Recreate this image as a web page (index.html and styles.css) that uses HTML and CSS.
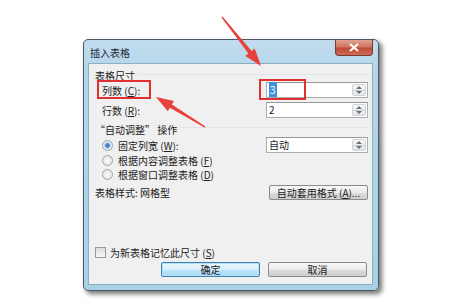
FILE: index.html
```html
<!DOCTYPE html>
<html lang="zh-CN">
<head>
    <meta charset="UTF-8">
    <meta name="viewport" content="width=device-width, initial-scale=1.0">
    <title>插入表格</title>
    <link rel="stylesheet" href="styles.css">
</head>
<body>
    <div class="page">
        <div class="dialog">
            <div class="titlebar">
                <span class="title">插入表格</span>
                <span class="close-btn">
                    <svg width="12" height="9" viewBox="0 0 12 9"><path d="M2 1 L10 8 M10 1 L2 8" stroke="#fff" stroke-width="2.2"/></svg>
                </span>
            </div>
            <div class="client">
                <div class="group-head row-size">表格尺寸<span class="rule"></span></div>
                <div class="field row-cols">
                    <span class="label">列数 (<u>C</u>):</span>
                    <span class="spin"><span class="value"><span class="sel">3</span></span><span class="arrows"></span></span>
                </div>
                <div class="field row-rows">
                    <span class="label">行数 (<u>R</u>):</span>
                    <span class="spin"><span class="value">2</span><span class="arrows"></span></span>
                </div>
                <div class="group-head row-auto">“自动调整” 操作<span class="rule"></span></div>
                <div class="field row-fixed">
                    <span class="label"><span class="radio on"></span>固定列宽 (<u>W</u>):</span>
                    <span class="spin"><span class="value">自动</span><span class="arrows"></span></span>
                </div>
                <div class="field row-opt">
                    <span class="label"><span class="radio"></span>根据内容调整表格 (<u>F</u>)</span>
                </div>
                <div class="field row-opt">
                    <span class="label"><span class="radio"></span>根据窗口调整表格 (<u>D</u>)</span>
                </div>
                <div class="field row-style">
                    <span class="style-label">表格样式: 网格型</span>
                    <span class="btn">自动套用格式 (<u>A</u>)...</span>
                </div>
                <div class="check-row">
                    <span class="checkbox"></span>为新表格记忆此尺寸 (<u>S</u>)
                </div>
                <div class="actions">
                    <span class="btn default">确定</span>
                    <span class="btn">取消</span>
                </div>
            </div>
        </div>
    </div>

    <svg class="marks" width="465" height="307" viewBox="0 0 465 307">
        <rect x="98" y="81" width="52" height="17" fill="none" stroke="#e03131" stroke-width="2"/>
        <rect x="260" y="80" width="45" height="19" fill="none" stroke="#e03131" stroke-width="2"/>
        <polygon fill="#e8413b" points="221.5,17.4 222.5,16.6 251.6,50.9 254.7,48.5 261,66 245.3,55.9 248.4,53.4"/>
        <polygon fill="#e8413b" points="205.5,126.5 204.5,127.5 169.9,107.8 167.8,111.2 156,97 174,101 171.9,104.4"/>
    </svg>
</body>
</html>
```

FILE: styles.css
```css
body {
    margin: 0;
    width: 465px;
    height: 307px;
    overflow: hidden;
    background-color: #fff;
    font-family: "Noto Sans CJK SC", "Liberation Sans", sans-serif;
    font-size: 10px;
    color: #222;
    position: relative;
}
.page {
    padding: 39px 0 0 83px;
}
.dialog {
    width: 285px;
    height: 245px;
    padding: 0 5px 5px 4px;
    border: 1px solid #4a5866;
    border-radius: 5px;
    background: linear-gradient(#c2dcee, #b4d6ea 30px, #a9d1e6);
    box-shadow: 3px 3px 5px rgba(0, 0, 0, 0.55);
}
.titlebar {
    height: 23px;
    display: flex;
    justify-content: space-between;
    align-items: flex-start;
}
.title {
    margin: 5px 0 0 2px;
    color: #1c2b38;
}
.close-btn {
    width: 38px;
    height: 16px;
    display: flex;
    align-items: center;
    justify-content: center;
    border: 1px solid #7a3a30;
    border-top: none;
    border-radius: 0 0 4px 4px;
    box-sizing: border-box;
    background: linear-gradient(#e2a190, #cf7562 45%, #bd4a36 55%, #cc6d58);
}
.client {
    height: 220px;
    border: 1px solid #8eaec4;
    background-color: #f0f0f0;
    padding: 0 4px 0 6px;
    display: flex;
    flex-direction: column;
}
.group-head {
    display: flex;
    align-items: center;
    height: 13px;
    color: #1a1a1a;
}
.rule {
    flex: 1;
    height: 1px;
    margin: 0 0 3px 4px;
    background-color: #dde3e8;
}
.row-size {
    margin-top: 5px;
}
.row-auto {
    margin-top: 4px;
    height: 14px;
}
.field {
    display: flex;
    justify-content: space-between;
    align-items: center;
    height: 16px;
}
.row-rows {
    margin-top: 4px;
}
.row-fixed {
    margin-top: 1px;
}
.row-opt {
    height: 14px;
}
.row-style {
    margin-top: 3px;
}
.label {
    display: flex;
    align-items: center;
    padding-left: 7px;
}
.style-label {
    color: #1a1a1a;
}
.spin {
    width: 102px;
    height: 16px;
    box-sizing: border-box;
    border: 1px solid #abadb3;
    border-top-color: #999;
    background-color: #fff;
    display: flex;
}
.value {
    flex: 1;
    padding-left: 2px;
    line-height: 14px;
}
.sel {
    background-color: #3f8fe0;
    color: #fff;
    padding: 0 1px;
}
.arrows {
    width: 12px;
    margin: 1px;
    border: 1px solid #cfd3d8;
    border-radius: 2px;
    background: linear-gradient(#f6f6f6, #eceef0 5px, #c9cdd2 5px, #c9cdd2 6px, #eceef0 6px, #e2e4e6);
    position: relative;
}
.arrows::before,
.arrows::after {
    content: "";
    position: absolute;
    left: 3px;
    border-left: 3px solid transparent;
    border-right: 3px solid transparent;
}
.arrows::before {
    top: 1px;
    border-bottom: 3px solid #6f747b;
}
.arrows::after {
    bottom: 1px;
    border-top: 3px solid #6f747b;
}
.radio {
    width: 9px;
    height: 9px;
    margin-right: 5px;
    border: 1px solid #a0a4a8;
    border-radius: 50%;
    background: radial-gradient(#fafafa, #dcdfe2);
    box-sizing: content-box;
}
.radio.on {
    background: radial-gradient(circle, #3a6fb0 0, #5c93d0 2px, #eef2f6 3.5px, #d7dde3 5px);
}
.btn {
    width: 99px;
    height: 15px;
    box-sizing: border-box;
    border: 1px solid #8a8a8a;
    border-radius: 2px;
    background: linear-gradient(#f7f7f7, #ebebeb 50%, #dcdcdc 51%, #cfcfcf);
    display: flex;
    align-items: center;
    justify-content: center;
    color: #1a1a1a;
}
.btn.default {
    border-color: #3c7fb1;
    background: linear-gradient(#eaf6fd, #d9f0fc 50%, #bee6fd 51%, #a7d9f5);
    box-shadow: inset 0 0 0 1px #b7e0f6;
}
.check-row {
    margin-top: auto;
    display: flex;
    align-items: center;
    height: 14px;
}
.checkbox {
    width: 9px;
    height: 9px;
    margin-right: 4px;
    border: 1px solid #9a9a9a;
    background: linear-gradient(#dcdcdc, #f8f8f8);
}
.actions {
    display: flex;
    justify-content: flex-end;
    gap: 8px;
    margin: 3px 1px 7px 0;
}
.marks {
    position: absolute;
    top: 0;
    left: 0;
}
```
